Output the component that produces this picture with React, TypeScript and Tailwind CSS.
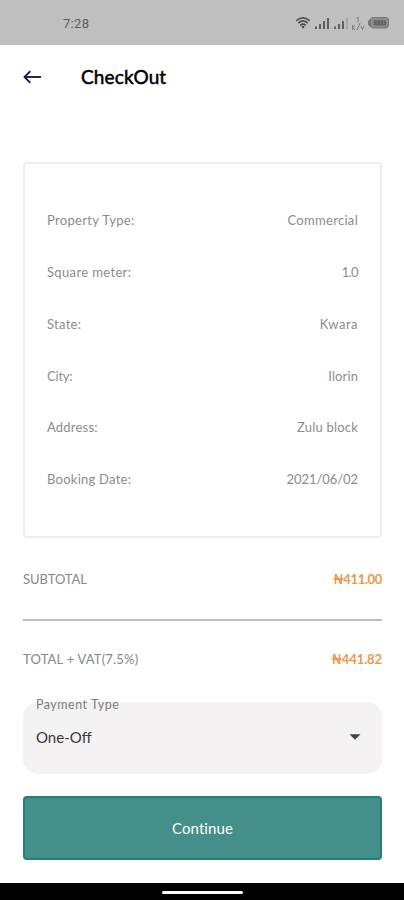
import { useState } from "react";

const details = [
  { label: "Property Type:", value: "Commercial", labelClass: "tracking-[0.32px]", valueClass: "tracking-[0.3px]" },
  { label: "Square meter:", value: "1.0", labelClass: "tracking-[0.36px]", valueClass: "tracking-[-0.6px]" },
  { label: "State:", value: "Kwara", labelClass: "tracking-[0.3px]", valueClass: "tracking-[0.5px]" },
  { label: "City:", value: "Ilorin", labelClass: "tracking-[-0.2px]", valueClass: "tracking-[0.1px]" },
  { label: "Address:", value: "Zulu block", labelClass: "tracking-[0.2px]", valueClass: "tracking-[0.2px]" },
  { label: "Booking Date:", value: "2021/06/02", labelClass: "tracking-[0.25px]", valueClass: "tracking-[-0.05px]" },
];

const StatusBar = () => {
  return (
    <div className="flex h-[45px] items-center bg-[#bfbfbf] pl-[63px] pr-[12px] pt-[1px]">
      <span className="font-['Roboto',sans-serif] text-[13px] leading-none tracking-[0.3px] text-[#5c5c5c]">
        7:28
      </span>
      <svg className="ml-auto" width="98" height="20" viewBox="0 0 98 20" fill="none">
        {/* wifi */}
        <g stroke="#505050" strokeWidth="1.7" strokeLinecap="round">
          <path d="M2.8 7.4Q9 2.2 15.2 7.4" />
          <path d="M4.8 9.7Q9 6.2 13.2 9.7" />
          <path d="M6.8 12Q9 10.3 11.2 12" />
        </g>
        <circle cx="9" cy="14" r="1.3" fill="#505050" />
        {/* signal bars */}
        <path d="M21 13.5h2V16h-2zM25 11h2v5h-2zM29 8h2v8h-2zM33 5h2v11h-2z" fill="#5f5f5f" />
        <path d="M40 13.5h2V16h-2zM44 11h2v5h-2zM48 8h2v8h-2z" fill="#5f5f5f" />
        <path d="M52.5 5h1v11h-1z" fill="#8e8e8e" />
        {/* network speed */}
        <path d="M64 4v5M62.5 5.5l1.5-1.5M58.5 12v5M58.5 14.5l2.5-2M58.5 14.5l2.5 2.5M66 10l-3 7M67 13l1.5 3.5 1.5-3.5" stroke="#7c7c7c" strokeWidth="1" />
        {/* battery */}
        <path d="M77 5.5L74 8v4l3 2.5z" fill="#777" />
        <rect x="76.5" y="4.5" width="18" height="10.5" rx="2.5" fill="#8c8c8c" stroke="#777" />
        <rect x="80" y="7.3" width="12" height="5" fill="#626262" />
        <path d="M83 8v3M86.5 8.5v3M89.5 8v3" stroke="#7c7c7c" />
      </svg>
    </div>
  );
};

const App = () => {
  const [paymentType] = useState("One-Off");

  return (
    <div className="flex h-[900px] w-[404px] flex-col overflow-hidden bg-white font-['Lato',sans-serif]">
      <StatusBar />

      <header className="flex h-[64px] items-center pl-[23px]">
        <button aria-label="Go back">
          <svg width="19" height="14" viewBox="0 0 19 14" fill="none" strokeWidth="1.8">
            <path d="M2 7H18" stroke="#111122" />
            <path d="M7.3 1.2L1.5 7L7.3 12.8" stroke="#14145c" />
          </svg>
        </button>
        <h1 className="ml-[39px] -mt-[1px] text-[19px] font-normal leading-none tracking-[0.15px] text-black [-webkit-text-stroke:0.5px_black]">
          CheckOut
        </h1>
      </header>

      <main className="flex flex-1 flex-col pl-[23px] pr-[22px] pt-[53px]">
        <section className="h-[376px] rounded-[4px] border-2 border-[#ededed] px-[22px] pt-[31px]">
          {details.map(({ label, value, labelClass, valueClass }) => (
            <div
              key={label}
              className="flex h-[51.8px] items-center justify-between text-[13px] text-[#8b8b90]"
            >
              <span className={labelClass}>{label}</span>
              <span className={valueClass}>{value}</span>
            </div>
          ))}
        </section>

        <div className="flex h-[83px] items-center justify-between border-b-2 border-[#bfbfbf] pt-[2px] text-[13px] text-[#858891]">
          <span className="tracking-[-0.05px]">SUBTOTAL</span>
          <span className="font-bold tracking-[-0.35px] text-[#f0964a]">₦411.00</span>
        </div>
        <div className="flex h-[77px] items-center justify-between text-[13px] text-[#858891]">
          <span className="tracking-[0.2px]">TOTAL + VAT(7.5%)</span>
          <span className="font-bold tracking-[-0.1px] text-[#f0964a]">₦441.82</span>
        </div>

        <div className="mt-[4px] flex h-[72px] flex-col rounded-[15px] bg-[#f4f2f3] px-[13px]">
          <label className="-mt-[5px] text-[12.5px] leading-[16px] tracking-[0.5px] text-[#7c7c7e]">
            Payment Type
          </label>
          <div className="mt-[14px] flex items-center justify-between pr-[8px] text-[15px] leading-[20px] text-[#39393b]">
            <span>{paymentType}</span>
            <svg width="12" height="6" viewBox="0 0 12 6">
              <path d="M0.5 0.3H11.5L6 5.8Z" fill="#454547" />
            </svg>
          </div>
        </div>

        <button className="mt-[22px] h-[64px] rounded-[4px] border-2 border-[#238175] bg-[#448f89] text-[15px] tracking-[0.1px] text-white">
          Continue
        </button>
      </main>

      <footer className="flex h-[17px] items-center justify-center bg-black pt-[2px]">
        <div className="h-[3px] w-[81px] rounded-full bg-white" />
      </footer>
    </div>
  );
};

export default App;
